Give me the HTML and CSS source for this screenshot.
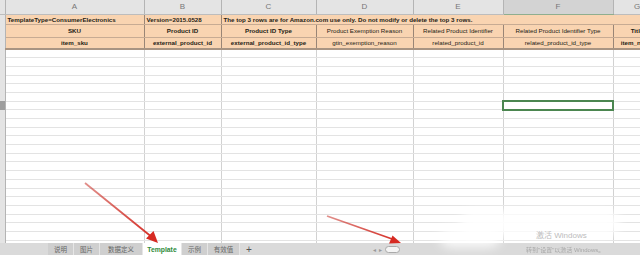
FILE: index.html
```html
<!DOCTYPE html>
<html lang="en">

<head>
    <meta charset="UTF-8">
    <meta name="viewport" content="width=device-width, initial-scale=1.0">
    <title>Template</title>
    <link rel="stylesheet" href="styles.css">
</head>

<body>
    <div class="page">
        <!-- 表格区域 -->
        <div class="sheet">
            <table class="grid">
                <colgroup>
                    <col class="c0"><col class="ca"><col class="cb"><col class="cc">
                    <col class="cd"><col class="ce"><col class="cf"><col class="cg">
                </colgroup>
                <tr class="letters">
                    <th></th><th>A</th><th>B</th><th>C</th><th>D</th><th>E</th><th class="on">F</th><th>G</th>
                </tr>
                <tr class="h1">
                    <th></th>
                    <td>TemplateType=ConsumerElectronics</td>
                    <td>Version=2015.0528</td>
                    <td colspan="5">The top 3 rows are for Amazon.com use only. Do not modify or delete the top 3 rows.</td>
                </tr>
                <tr class="h2">
                    <th></th>
                    <td class="b">SKU</td>
                    <td class="b">Product ID</td>
                    <td class="b">Product ID Type</td>
                    <td>Product Exemption Reason</td>
                    <td>Related Product Identifier</td>
                    <td>Related Product Identifier Type</td>
                    <td class="b">Title</td>
                </tr>
                <tr class="h3">
                    <th></th>
                    <td class="b">item_sku</td>
                    <td class="b">external_product_id</td>
                    <td class="b">external_product_id_type</td>
                    <td>gtin_exemption_reason</td>
                    <td>related_product_id</td>
                    <td>related_product_id_type</td>
                    <td class="b">item_name</td>
                </tr>
                <tr class="r"><th></th><td></td><td></td><td></td><td></td><td></td><td></td><td></td></tr>
                <tr class="r"><th></th><td></td><td></td><td></td><td></td><td></td><td></td><td></td></tr>
                <tr class="r"><th></th><td></td><td></td><td></td><td></td><td></td><td></td><td></td></tr>
                <tr class="r"><th></th><td></td><td></td><td></td><td></td><td></td><td></td><td></td></tr>
                <tr class="r"><th></th><td></td><td></td><td></td><td></td><td></td><td></td><td></td></tr>
                <tr class="r"><th></th><td></td><td></td><td></td><td></td><td></td><td></td><td></td></tr>
                <tr class="r"><th class="mark"></th><td></td><td></td><td></td><td></td><td></td><td class="sel"></td><td></td></tr>
                <tr class="r"><th></th><td></td><td></td><td></td><td></td><td></td><td></td><td></td></tr>
                <tr class="r"><th></th><td></td><td></td><td></td><td></td><td></td><td></td><td></td></tr>
                <tr class="r"><th></th><td></td><td></td><td></td><td></td><td></td><td></td><td></td></tr>
                <tr class="r"><th></th><td></td><td></td><td></td><td></td><td></td><td></td><td></td></tr>
                <tr class="r"><th></th><td></td><td></td><td></td><td></td><td></td><td></td><td></td></tr>
                <tr class="r"><th></th><td></td><td></td><td></td><td></td><td></td><td></td><td></td></tr>
                <tr class="r"><th></th><td></td><td></td><td></td><td></td><td></td><td></td><td></td></tr>
                <tr class="r"><th></th><td></td><td></td><td></td><td></td><td></td><td></td><td></td></tr>
                <tr class="r"><th></th><td></td><td></td><td></td><td></td><td></td><td></td><td></td></tr>
                <tr class="r"><th></th><td></td><td></td><td></td><td></td><td></td><td></td><td></td></tr>
                <tr class="r"><th></th><td></td><td></td><td></td><td></td><td></td><td></td><td></td></tr>
                <tr class="r"><th></th><td></td><td></td><td></td><td></td><td></td><td></td><td></td></tr>
                <tr class="r"><th></th><td></td><td></td><td></td><td></td><td></td><td></td><td></td></tr>
                <tr class="r"><th></th><td></td><td></td><td></td><td></td><td></td><td></td><td></td></tr>
                <tr class="r"><th></th><td></td><td></td><td></td><td></td><td></td><td></td><td></td></tr>
                <tr class="r"><th></th><td></td><td></td><td></td><td></td><td></td><td></td><td></td></tr>
            </table>
        </div>

        <!-- 底部工作表标签 -->
        <div class="tabbar">
            <div class="tabs">
                <span class="tab">说明</span>
                <span class="tab">图片</span>
                <span class="tab">数据定义</span>
                <span class="tab active">Template</span>
                <span class="tab">示例</span>
                <span class="tab">有效值</span>
                <span class="plus">+</span>
            </div>
            <div class="scroll">
                <span class="arr">◂</span>
                <span class="arr">▸</span>
                <span class="thumb"></span>
            </div>
            <div class="activate">转到"设置"以激活 Windows。</div>
        </div>

        <!-- 水印 -->
        <div class="mark-wm">
            <div class="blob"></div>
            <div class="blob small"></div>
            <div class="wm-text">激活 Windows</div>
        </div>

        <!-- 红色箭头 -->
        <svg class="arrows" width="640" height="255" viewBox="0 0 640 255">
            <defs>
                <linearGradient id="fade1" gradientUnits="userSpaceOnUse" x1="85" y1="183" x2="155" y2="240">
                    <stop offset="0" stop-color="#c9342c" stop-opacity="0.55"/>
                    <stop offset="1" stop-color="#d62a22"/>
                </linearGradient>
                <linearGradient id="fade2" gradientUnits="userSpaceOnUse" x1="327" y1="216" x2="398" y2="241">
                    <stop offset="0" stop-color="#c9342c" stop-opacity="0.55"/>
                    <stop offset="1" stop-color="#d62a22"/>
                </linearGradient>
            </defs>
            <path d="M85 183 L153 238" stroke="url(#fade1)" stroke-width="1.8" fill="none"/>
            <polygon points="158,243 146,238.5 153.5,231" fill="#d62a22"/>
            <path d="M327 216 L395 240" stroke="url(#fade2)" stroke-width="1.8" fill="none"/>
            <polygon points="401,243 389,243.5 392.5,235.5" fill="#d62a22"/>
        </svg>
    </div>
</body>

</html>
```

FILE: styles.css
```css
* {
    margin: 0;
    padding: 0;
    box-sizing: border-box;
}

body {
    width: 640px;
    height: 255px;
    overflow: hidden;
    background-color: #fff;
    font-family: "Liberation Sans", "Noto Sans CJK SC", sans-serif;
}

.page {
    position: relative;
    width: 640px;
    height: 255px;
    display: flex;
    flex-direction: column;
}

.sheet {
    height: 243px;
    overflow: hidden;
}

.grid {
    border-collapse: collapse;
    table-layout: fixed;
    width: 661px;
}

.c0 { width: 5px; }
.ca { width: 139px; }
.cb { width: 77px; }
.cc { width: 95px; }
.cd { width: 97px; }
.ce { width: 90px; }
.cf { width: 110px; }
.cg { width: 48px; }

.grid td,
.grid th {
    overflow: hidden;
    white-space: nowrap;
    padding: 0;
}

/* 列标 */
.letters {
    height: 14px;
}

.letters th {
    background-color: #ebebeb;
    border-bottom: 1px solid #bdbdbd;
    border-right: 1px solid #d6d6d6;
    color: #777;
    font-weight: normal;
    font-size: 8px;
    text-align: center;
}

.letters th.on {
    background-color: #d3d3d3;
    border-bottom: 1px solid #8fae8f;
}

/* 行号 */
.grid th {
    background-color: #e4e4e4;
    border-right: 1px solid #b4b4b4;
}

.grid th.mark {
    background-color: #9e9e9e;
}

/* 前三行 */
.h1,
.h2,
.h3 {
    font-size: 6.2px;
    color: #241c15;
}

.h1 { height: 10px; }
.h2 { height: 13px; }
.h3 { height: 12px; }

.h1 td,
.h2 td,
.h3 td {
    background-color: #f9d4b1;
    border-bottom: 1px solid #c7ab93;
    border-right: 1px solid #9a8676;
}

.h1 td {
    font-weight: bold;
    padding-left: 2px;
}

.h2 td,
.h3 td {
    text-align: center;
}

.h3 td {
    border-bottom: 2px solid #a89482;
}

.b {
    font-weight: bold;
}

/* 空白行 */
.r {
    height: 8.7px;
}

.r td {
    border-bottom: 1px solid #e3e3e3;
    border-right: 1px solid #d2d2d2;
}

.r td.sel {
    border: 2px solid #4b8650;
}

/* 底部标签栏 */
.tabbar {
    height: 12px;
    background-color: #dadada;
    display: flex;
    align-items: stretch;
    font-size: 6.5px;
    color: #666;
    position: relative;
}

.tabs {
    display: flex;
    align-items: stretch;
    padding-left: 48px;
}

.tab {
    display: flex;
    align-items: center;
    justify-content: center;
    background-color: #cfcfcf;
    border-right: 1px solid #e6e6e6;
}

.tab:nth-child(1) { width: 26px; }
.tab:nth-child(2) { width: 26px; }
.tab:nth-child(3) { width: 43px; }
.tab:nth-child(5) { width: 26px; }
.tab:nth-child(6) { width: 32px; }

.tab.active {
    width: 39px;
    background-color: #fff;
    color: #2f8a3a;
    font-weight: bold;
    font-size: 6.8px;
}

.plus {
    display: flex;
    align-items: center;
    padding-left: 6px;
    font-size: 10px;
    color: #555;
}

.scroll {
    display: flex;
    align-items: center;
    gap: 3px;
    margin-left: 121px;
    color: #999;
    font-size: 6px;
}

.thumb {
    width: 15px;
    height: 7px;
    border: 1px solid #aaa;
    border-radius: 4px;
    background-color: #f4f4f4;
}

.activate {
    position: absolute;
    left: 526px;
    top: 2px;
    font-size: 6px;
    color: #9a9a9a;
    opacity: 0.8;
}

/* 水印 */
.mark-wm {
    position: absolute;
    left: 440px;
    top: 205px;
    width: 190px;
    height: 45px;
    pointer-events: none;
}

.blob {
    position: absolute;
    left: 20px;
    top: 5px;
    width: 160px;
    height: 26px;
    background-color: rgba(255, 255, 255, 0.9);
    border-radius: 14px;
    filter: blur(5px);
}

.blob.small {
    left: 0;
    top: 22px;
    width: 60px;
    height: 20px;
    filter: blur(6px);
}

.wm-text {
    position: absolute;
    left: 96px;
    top: 24px;
    font-size: 8px;
    color: #bcbcbc;
}

.arrows {
    position: absolute;
    left: 0;
    top: 0;
    pointer-events: none;
}
```
